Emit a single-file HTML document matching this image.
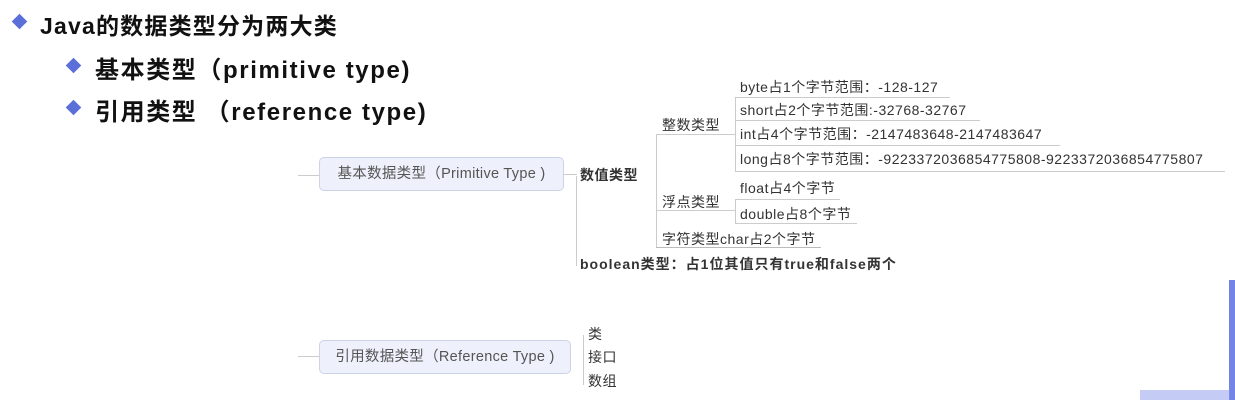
<!DOCTYPE html><html><head><meta charset="utf-8"><style>
body{margin:0;width:1235px;height:400px;background:#fff;position:relative;overflow:hidden;font-family:"Liberation Sans","Noto Sans CJK SC",sans-serif;color:#111}
.a{position:absolute;white-space:nowrap}
.h{font-weight:bold}
.d{position:absolute;width:11px;height:11px;background:#5b6fd8;transform:rotate(45deg)}
.m{font-size:14px;color:#333;letter-spacing:0.5px}
.v{position:absolute;border-left:1px solid #ccc}
.hz{position:absolute;border-top:1px solid #ccc}
.bx{position:absolute;background:#eef1fb;border:1px solid #cdd3e6;border-radius:5px;font-size:14.5px;color:#555;text-align:center}
</style></head><body>
<div class="d" style="left:14px;top:16px"></div>
<div class="a h" style="left:40px;top:7px;font-size:23px;letter-spacing:1.2px">Java的数据类型分为两大类</div>
<div class="d" style="left:68px;top:60px"></div>
<div class="a h" style="left:95px;top:50px;font-size:24px;letter-spacing:1.6px">基本类型（primitive type)</div>
<div class="d" style="left:68px;top:102px"></div>
<div class="a h" style="left:95px;top:92px;font-size:24px;letter-spacing:1.6px">引用类型 （reference type)</div>

<div class="hz" style="left:298px;top:175px;width:22px"></div>
<div class="bx" style="left:319px;top:157px;width:243px;height:32px;line-height:32px;letter-spacing:0.3px">基本数据类型（Primitive Type )</div>
<div class="hz" style="left:563px;top:174px;width:14px"></div>
<div class="a h m" style="left:580px;top:165px">数值类型</div>
<div class="v" style="left:576px;top:176px;height:90px"></div>
<div class="a h m" style="left:580px;top:254px;letter-spacing:1px">boolean类型：占1位其值只有true和false两个</div>
<div class="v" style="left:656px;top:134px;height:113px"></div>
<div class="hz" style="left:656px;top:134px;width:80px"></div>
<div class="a m" style="left:662px;top:115px">整数类型</div>
<div class="hz" style="left:656px;top:210px;width:80px"></div>
<div class="a m" style="left:662px;top:192px">浮点类型</div>
<div class="a m" style="left:662px;top:229px">字符类型char占2个字节</div>
<div class="hz" style="left:656px;top:247px;width:165px;border-color:#bbb"></div>
<div class="v" style="left:735px;top:97px;height:75px"></div>
<div class="a m" style="left:740px;top:77px">byte占1个字节范围：-128-127</div>
<div class="a m" style="left:740px;top:100px">short占2个字节范围:-32768-32767</div>
<div class="a m" style="left:740px;top:124px">int占4个字节范围：-2147483648-2147483647</div>
<div class="a m" style="left:740px;top:149px">long占8个字节范围：-9223372036854775808-9223372036854775807</div>
<div class="hz" style="left:735px;top:97px;width:215px"></div>
<div class="hz" style="left:735px;top:120px;width:245px"></div>
<div class="hz" style="left:735px;top:145px;width:325px"></div>
<div class="hz" style="left:735px;top:171px;width:490px"></div>
<div class="v" style="left:735px;top:199px;height:24px"></div>
<div class="a m" style="left:740px;top:178px">float占4个字节</div>
<div class="a m" style="left:740px;top:204px">double占8个字节</div>
<div class="hz" style="left:735px;top:199px;width:105px"></div>
<div class="hz" style="left:735px;top:223px;width:122px"></div>

<div class="hz" style="left:298px;top:356px;width:22px"></div>
<div class="bx" style="left:319px;top:340px;width:250px;height:32px;line-height:32px;letter-spacing:0.3px">引用数据类型（Reference Type )</div>
<div class="v" style="left:583px;top:335px;height:50px"></div>
<div class="a m" style="left:588px;top:324px">类</div>
<div class="a m" style="left:588px;top:347px">接口</div>
<div class="a m" style="left:588px;top:371px">数组</div>
<div class="a" style="left:1229px;top:280px;width:6px;height:120px;background:#7384e6"></div>
<div class="a" style="left:1140px;top:390px;width:90px;height:10px;background:#8a98ea;opacity:.5"></div>
</body></html>
